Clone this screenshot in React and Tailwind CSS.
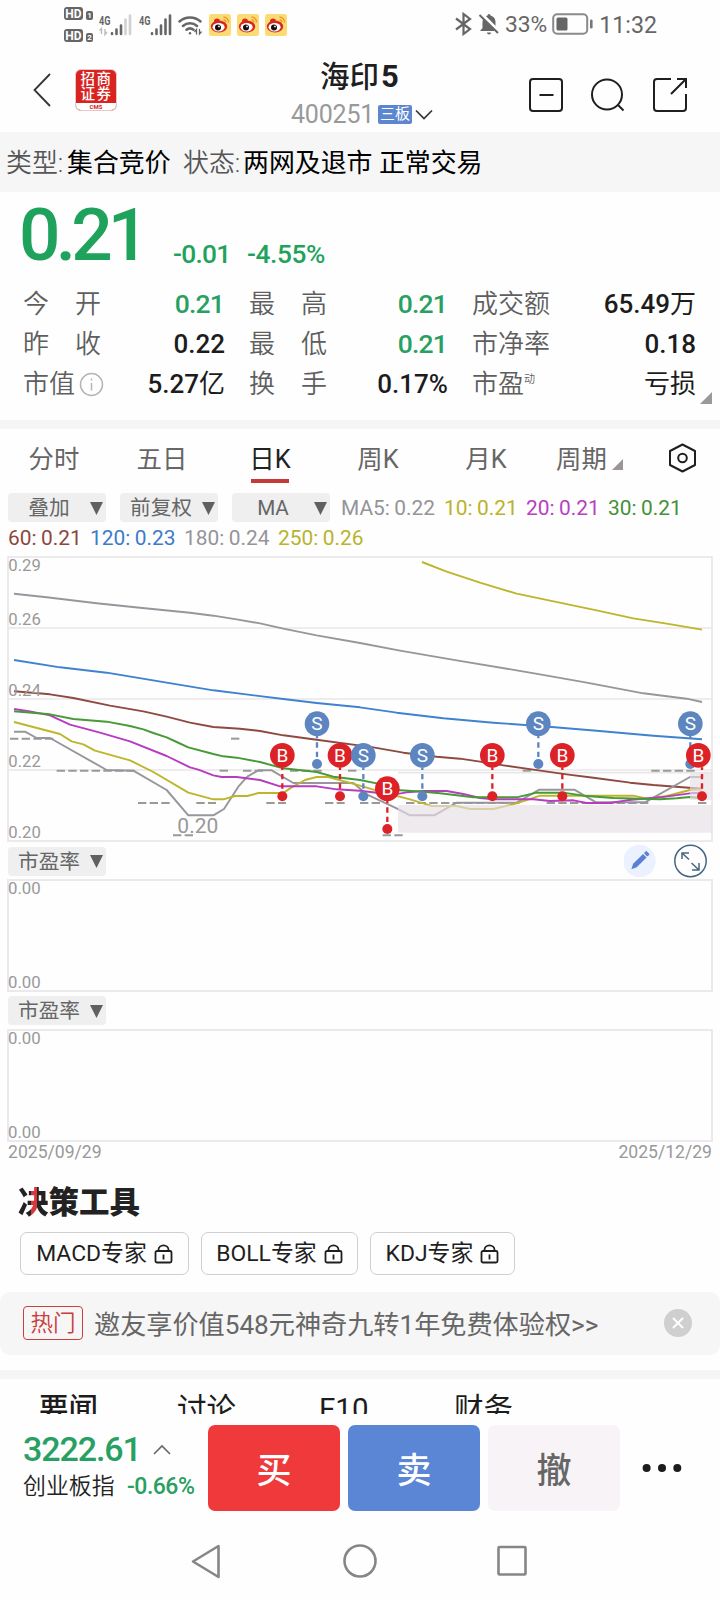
import { useState } from 'react';

const QUOTES = [
  [['今　开', '0.21', 'down'], ['最　高', '0.21', 'down'], ['成交额', '65.49万']],
  [['昨　收', '0.22'], ['最　低', '0.21', 'down'], ['市净率', '0.18']],
  [['市值', '5.27亿', '', 'info'], ['换　手', '0.17%'], ['市盈', '亏损', '', 'dyn']],
];

const TABS = ['分时', '五日', '日K', '周K', '月K'];

// chart space is 3 units per pixel
const LINES = [
  { key: 'ma250', color: '#bdb62c', points: '1266,36 1340,65 1440,98 1550,131 1650,152 1790,181 1900,205 2000,221 2106,239' },
  { key: 'ma180', color: '#98969c', points: '42,131 140,142 290,160 420,173 570,188 640,197 710,208 780,220 850,236 950,256 1080,279 1200,302 1370,331 1550,361 1620,373 1760,398 1930,430 2060,446 2106,456' },
  { key: 'ma120', color: '#3f82cf', points: '42,330 180,352 320,368 500,398 640,421 850,447 950,459 1080,472 1190,488 1330,505 1480,518 1655,531 1790,542 1960,557 2106,568' },
  { key: 'ma60',  color: '#8e4a40', points: '42,424 150,433 220,444 330,467 430,484 500,500 570,518 640,531 720,536 780,543 850,556 950,569 1120,592 1210,608 1310,620 1380,626 1440,635 1510,646 1600,659 1700,673 1780,683 1890,698 1960,705 2106,716' },
  { key: 'ma5',   color: '#98969c', points: '42,545 75,545 110,564 150,564 320,660 400,662 500,720 565,796 640,796 672,777 715,710 742,680 775,661 815,661 880,699 1060,699 1100,733 1190,775 1230,796 1303,796 1370,758 1550,758 1618,719 1723,719 1788,757 1935,757 2070,681 2106,681' },
  { key: 'ma10',  color: '#bdb62c', points: '42,516 180,552 215,574 250,583 285,602 390,631 460,666 565,728 640,748 670,748 705,738 742,738 775,729 850,729 870,715 915,690 950,681 985,681 1080,707 1140,725 1180,735 1230,748 1270,760 1295,768 1370,768 1410,777 1480,777 1550,760 1620,737 1900,737 1940,746 2000,738 2070,720 2106,718' },
  { key: 'ma20',  color: '#b63cc0', points: '42,477 90,484 150,496 210,524 300,548 390,574 500,618 570,652 595,659 640,676 665,681 710,681 780,690 840,709 950,709 1010,718 1080,722 1180,734 1220,727 1270,723 1340,723 1390,732 1440,744 1480,748 1600,748 1650,753 1720,751 1760,759 1830,759 1880,751 1920,747 1980,742 2070,730 2106,728' },
  { key: 'ma30',  color: '#479a36', points: '42,484 150,493 220,507 320,515 390,528 430,538 460,549 500,562 530,576 565,592 640,612 670,619 710,623 780,636 850,655 950,666 1000,680 1080,690 1130,700 1190,720 1270,725 1320,730 1420,742 1550,742 1610,728 1690,728 1750,737 1840,744 1980,748 2030,745 2070,741 2106,745' },
];

const FLAT_DAYS = [
  [30, 160, 566], [693, 718, 566],
  [170, 405, 662], [659, 684, 662], [729, 789, 662], [870, 965, 662], [1044, 1069, 662], [1568, 1593, 662], [1954, 2084, 662],
  [414, 510, 759], [589, 648, 759], [799, 858, 759], [975, 1034, 759], [1080, 1140, 759], [1218, 1562, 759], [1640, 1945, 759], [2094, 2119, 759],
  [519, 579, 856], [1148, 1208, 856],
];

const TRADES = [
  { type: 'S', x: 951,  y: 521, dot: 642 },
  { type: 'B', x: 847,  y: 616, dot: 739 },
  { type: 'B', x: 1020, y: 616, dot: 739 },
  { type: 'S', x: 1090, y: 616, dot: 739 },
  { type: 'B', x: 1162, y: 716, dot: 837 },
  { type: 'S', x: 1267, y: 616, dot: 739 },
  { type: 'B', x: 1477, y: 616, dot: 739 },
  { type: 'S', x: 1615, y: 521, dot: 642 },
  { type: 'B', x: 1687, y: 616, dot: 739 },
  { type: 'S', x: 2071, y: 521, dot: 642 },
  { type: 'B', x: 2095, y: 616, dot: 739, stem: 2106 },
];

function Weibo() {
  return (
    <svg width="22" height="22" viewBox="0 0 22 22" className="mr-1.5">
      <rect width="22" height="22" rx="2.5" fill="#fbdc74" />
      <ellipse cx="10" cy="12.6" rx="8.2" ry="6" fill="#d9271f" />
      <circle cx="8" cy="7.6" r="3" fill="#d9271f" />
      <ellipse cx="9.6" cy="13.2" rx="6" ry="4.2" fill="#fff" />
      <circle cx="9" cy="13.4" r="3" fill="#111" />
      <circle cx="10" cy="12.4" r="0.9" fill="#fff" />
      <path d="M14.5 3a5 5 0 0 1 5 5.5M14.6 5.8a2.4 2.4 0 0 1 2.2 2.6" fill="none" stroke="#ee9b2d" strokeWidth="1.5" />
    </svg>
  );
}

function Signal({ weak }) {
  return (
    <svg width="34" height="24" viewBox="0 0 34 24">
      <text x="0" y="11.5" fontSize="13" fontWeight="700" fill="#666" textLength="11.5" lengthAdjust="spacingAndGlyphs">4G</text>
      {weak && <path d="M2.5 21v-5.5l-2 2M6 16v5.5l2-2.5" fill="none" stroke="#bbb" strokeWidth="1.4" />}
      <g strokeWidth="2.6" strokeLinecap="round" stroke="#666">
        <path d="M13 21v-.6M17.5 21v-4.5M22 21v-8.5" />
        <path d="M26.5 21V6.500M31 21V2.5" stroke={weak ? '#d3d0d3' : '#666'} />
      </g>
    </svg>
  );
}

function StatusBar() {
  return (
    <div className="flex h-[48px] shrink-0 items-center pt-px pl-[64px] text-[#666]">
      <div className="mr-[6px] flex flex-col gap-[9px]">
        {[1, 2].map(n => (
          <div key={n} className="flex h-[13px] items-end gap-[3px]">
            <span className="flex h-[13px] w-[19px] items-center justify-center rounded-[3px] bg-[#666] text-[12px] leading-none font-bold text-white">HD</span>
            <span className="flex h-[9px] w-[7px] items-center justify-center rounded-[2px] bg-[#666] text-[8px] leading-none font-bold text-white">{n}</span>
          </div>
        ))}
      </div>
      <Signal weak />
      <div className="w-[6px]" />
      <Signal />
      <svg width="26" height="22" viewBox="0 0 26 22" className="mr-[5px] ml-[5px]" fill="none" stroke="#666" strokeWidth="2.5" strokeLinecap="round">
        <path d="M1.5 7.5a15.500 15.500 0 0 1 21 0M5 12a10.500 10.500 0 0 1 14 0M8.500 15.800a5.500 5.500 0 0 1 7 0" />
        <circle cx="12" cy="19.3" r="1.2" fill="#666" stroke="none" />
        <path d="M18.500 20v-4.500l-1.700 2M21.500 15.500V20l1.700-2" strokeWidth="1.3" />
      </svg>
      <Weibo /><Weibo /><Weibo />
      <div className="ml-auto flex items-center pr-[63px]">
        <svg width="20" height="24" viewBox="0 0 20 24" fill="none" stroke="#666" strokeWidth="2.2">
          <path d="M2 6.500l14 10.500-6.500 5V2l6.500 5L2 17.500" />
        </svg>
        <svg width="22" height="24" viewBox="0 0 22 24" className="mr-[5px] ml-[4px]">
          <path d="M11 2a1.500 1.500 0 0 0-1.500 1.500A7 7 0 0 0 4.500 10v6l-2.500 3h18l-2.500-3v-6a7 7 0 0 0-5-6.500A1.500 1.500 0 0 0 11 2zM9 20.500a2 2 0 0 0 4 0z" fill="#666" />
          <path d="M2 1l19 19" stroke="#fff" strokeWidth="4" />
          <path d="M1.500 3l18.500 18" stroke="#666" strokeWidth="2" />
        </svg>
        <span className="pt-[2px] text-[22.8px] leading-none">33%</span>
        <svg width="42" height="22" viewBox="0 0 42 22" className="mx-[5px]">
          <rect x="1.2" y="1.2" width="34" height="19.5" rx="4" fill="none" stroke="#8a8a8a" strokeWidth="2" />
          <rect x="4.5" y="4.5" width="11" height="13" rx="1.5" fill="#666" />
          <rect x="38" y="6.5" width="2.6" height="9" rx="1.2" fill="#777" />
        </svg>
        <span className="pt-[2px] text-[23.2px] leading-none">11:32</span>
      </div>
    </div>
  );
}

function Header() {
  return (
    <div className="flex h-[84px] shrink-0 pl-[32px]">
      <svg width="20" height="36" viewBox="0 0 20 36" className="mt-[24px]" fill="none" stroke="#333" strokeWidth="1.8">
        <path d="M18 2L2.500 18 18 34" />
      </svg>
      <div className="mt-[21px] ml-[23px] flex h-[42px] w-[42px] flex-col overflow-hidden rounded-[6px] border border-[#e8c8c6] bg-[#d9231f] text-center text-white">
        <div className="mt-[2px] pl-px text-[14.5px] leading-[15px] font-medium tracking-[1.5px]">招商<br />证券</div>
        <div className="mt-auto bg-white text-[6px] leading-[7px] font-bold text-[#d9231f]">CMS</div>
      </div>
      <div className="ml-[174px] w-[145px]">
        <div className="mt-[11px] pl-[29px] text-[29.5px] leading-[36px] font-medium whitespace-nowrap text-[#1f1f1f]">
          海印<span className="ml-[2px] text-[31px] font-bold">5</span>
        </div>
        <div className="mt-[5px] flex h-[28px] items-center">
          <span className="pt-[2px] text-[25px] leading-[28px] tracking-[-0.2px] text-[#999]">400251</span>
          <span className="ml-[4px] flex h-[19px] w-[34px] items-center justify-center rounded-[2px] bg-[#5c86cf] text-[15px] leading-none text-white">三板</span>
          <svg width="18" height="11" viewBox="0 0 18 11" className="ml-[3px]" fill="none" stroke="#333" strokeWidth="1.7">
            <path d="M1 1.500l8 8 8-8" />
          </svg>
        </div>
      </div>
      <svg width="160" height="36" viewBox="0 0 160 36" className="mt-[29px] ml-[93px]" fill="none" stroke="#1f1f1f" strokeWidth="2">
        <rect x="1" y="2" width="32" height="32" rx="3" />
        <path d="M10.500 18h14" />
        <circle cx="78" cy="17.5" r="15" />
        <path d="M88.500 27.500l6 6" />
        <path d="M142 2h-14a3 3 0 0 0-3 3v26a3 3 0 0 0 3 3h26a3 3 0 0 0 3-3V17M148 2h9v9M157 2l-15 15" />
      </svg>
    </div>
  );
}

function QuoteCell({ cell }) {
  const [label, value, tone, extra] = cell;
  return (
    <div className="flex items-center justify-between whitespace-nowrap">
      <div className="flex items-center text-[26px] font-[350] text-[#5e5e5e]">
        {label}
        {extra === 'info' && (
          <svg width="25" height="25" viewBox="0 0 25 25" className="ml-[4px]" fill="none" stroke="#b5b5b5" strokeWidth="1.5">
            <circle cx="12.5" cy="12.5" r="11" />
            <path d="M12.500 11v7.500M12.500 6.500v2" />
          </svg>
        )}
        {extra === 'dyn' && <span className="mb-[8px] text-[11px]">动</span>}
      </div>
      <div className={tone === 'down' ? 'pr-px text-[26.5px] font-medium tracking-[-0.8px] text-[#28a062]' : 'text-[26px] font-medium text-[#1c1c1c]'}>
        {/[亿万]$/.test(value) ? <>{value.slice(0, -1)}<span className="font-normal">{value.slice(-1)}</span></> : <span className={value === '亏损' ? 'font-normal' : ''}>{value}</span>}
      </div>
    </div>
  );
}

function Selector({ label }) {
  return (
    <div className="flex h-[29px] w-[98px] items-center rounded-[4px] bg-[#efefef] text-[#666]">
      <div className="w-[82px] pt-[2px] text-center text-[20.7px] leading-none">{label}</div>
      <svg width="13" height="14" viewBox="0 0 13 14"><path d="M0 1h13L6.500 14z" fill="#606060" /></svg>
    </div>
  );
}

function Ma({ name, value, color, width }) {
  return (
    <div className="shrink-0 text-[20.9px] leading-none whitespace-nowrap" style={{ color, width }}>
      {name}:<span className="ml-[4.5px]">{value}</span>
    </div>
  );
}

function KChart() {
  return (
    <svg width="720" height="288" viewBox="0 15 2160 864" className="block shrink-0">
      <g fill="none" stroke="#e9e6e8" strokeWidth="5">
        <rect x="24" y="21" width="2112" height="852" />
        <path d="M24 234H2136M24 447H2136M24 660H2136M1194 668H2136" />
      </g>
      <g stroke="#999" strokeWidth="6" strokeDasharray="25 10">
        {FLAT_DAYS.map(([x1, x2, y]) => <line key={`${x1}-${y}`} x1={x1} x2={x2} y1={y} y2={y} />)}
      </g>
      {LINES.map(l => (
        <polyline key={l.key} points={l.points} fill="none" stroke={l.color} strokeWidth="5.8" strokeLinejoin="round" />
      ))}
      <rect x="1194" y="765" width="942" height="83" fill="#e6dfe5" fillOpacity="0.65" />
      <rect x="2070" y="668" width="66" height="82" fill="#e6dfe5" fillOpacity="0.65" />
      <g fontSize="50" fill="#999">
        <text x="25" y="63">0.29</text>
        <text x="25" y="225">0.26</text>
        <text x="25" y="438">0.24</text>
        <text x="25" y="651">0.22</text>
        <text x="25" y="864">0.20</text>
        <text x="532" y="849" fontSize="63">0.20</text>
      </g>
      {TRADES.map(t => {
        const color = t.type === 'B' ? '#dc2226' : '#5d86c1';
        const stem = t.stem ?? t.x;
        return (
          <g key={t.x}>
            <line x1={stem} x2={stem} y1={t.y + 36} y2={t.dot} stroke={color} strokeWidth="7" strokeDasharray="16 12" strokeDashoffset="8" />
            <circle cx={stem} cy={t.dot} r="15" fill={color} />
            <circle cx={t.x} cy={t.y} r="37" fill={color} />
            <text x={t.x} y={t.y + 20} fontSize="57" fill="#fff" textAnchor="middle">{t.type}</text>
          </g>
        );
      })}
    </svg>
  );
}

function EmptyPane() {
  return (
    <div className="mx-[7px] flex h-[113px] shrink-0 flex-col justify-between border-2 border-[#ebe9eb] text-[16.8px] leading-[15px] text-[#999]">
      <span className="-ml-px">0.00</span>
      <span className="-ml-px">0.00</span>
    </div>
  );
}

function Lock() {
  return (
    <svg width="19" height="20" viewBox="0 0 19 20" fill="none" stroke="#1f1f1f" strokeWidth="1.8">
      <rect x="1.5" y="7" width="16" height="11.5" rx="1.5" />
      <path d="M4.500 7V6a5 4.600 0 0 1 10 0v1M9.500 10.500v5" />
    </svg>
  );
}

export default function App() {
  const [tab, setTab] = useState('日K');

  return (
    <div className="flex h-[1600px] w-[720px] flex-col overflow-hidden bg-[#fefefe] font-[Roboto,'Noto_Sans_CJK_SC',sans-serif]">
      <StatusBar />
      <Header />

      <div className="flex h-[60px] shrink-0 items-center bg-[#f6f6f6] pt-[4px] pl-[6px] text-[25.9px] leading-none whitespace-nowrap text-black">
        <span className="w-[61px] font-[350] text-[#555]">类型:</span>
        <span className="w-[116px]">集合竞价</span>
        <span className="w-[60px] font-[350] text-[#555]">状态:</span>
        <span>两网及退市 正常交易</span>
      </div>

      {/* Price */}
      <div className="flex h-[91px] shrink-0 text-[#1fa35c]">
        <div className="w-[151px] pl-[19px] text-[73px] leading-[86px] font-medium tracking-[-4.8px]">0.21</div>
        <div className="mt-[48px] ml-[22px] w-[74px] text-[26.3px] leading-[28px] font-medium tracking-[-0.7px]">-0.01</div>
        <div className="mt-[48px] text-[26.3px] leading-[28px] font-medium tracking-[-0.4px]">-4.55%</div>
      </div>
      <div className="flex h-[137px] shrink-0 items-start pt-px pl-[23px]">
        <div className="grid auto-rows-[40px] grid-cols-[202px_199px_224px] gap-x-[24px]">
          {QUOTES.flat().map(cell => <QuoteCell key={cell[0]} cell={cell} />)}
        </div>
        <svg width="12" height="12" viewBox="0 0 12 12" className="mt-[108px] ml-[4px]"><path d="M12 0v12H0z" fill="#999" /></svg>
      </div>
      <div className="h-[9px] shrink-0 bg-[#f5f5f5]" />

      {/* Period tabs */}
      <div className="flex h-[64px] shrink-0 text-[25.4px] leading-none text-[#666]">
        {TABS.map(t => (
          <button key={t} onClick={() => setTab(t)}
            className={`flex w-[108px] flex-col items-center pt-[18px] ${t === tab ? 'text-[#222]' : ''}`}>
            <span>{t}</span>
            {t === tab && <span className="mt-[7px] h-[4px] w-[38px] bg-[#c33a38]" />}
          </button>
        ))}
        <button className="flex w-[128px] items-start pt-[18px] pl-[16px]">
          周期
          <svg width="11" height="11" viewBox="0 0 11 11" className="mt-[12px] ml-[5px]"><path d="M11 0v11H0z" fill="#9c9598" /></svg>
        </button>
        <svg width="28" height="30" viewBox="0 0 28 30" className="mt-[14px] block" fill="none" stroke="#1f1f1f" strokeWidth="2">
          <path d="M14.500 1.500L27 8v14l-12.500 6.500L2 22V8z" strokeLinejoin="round" />
          <circle cx="14.5" cy="15" r="4.3" />
        </svg>
      </div>

      {/* Indicators */}
      <div className="flex h-[29px] shrink-0 items-center pl-[8px]">
        <div className="flex w-[333px] gap-[14px]">
          <Selector label="叠加" />
          <Selector label="前复权" />
          <Selector label="MA" />
        </div>
        <div className="flex pt-[2px]">
          <Ma name="MA5" value="0.22" color="#949499" width={103} />
          <Ma name="10" value="0.21" color="#b9b32c" width={82} />
          <Ma name="20" value="0.21" color="#b83fc0" width={82} />
          <Ma name="30" value="0.21" color="#449138" width={80} />
        </div>
      </div>
      <div className="flex h-[33px] shrink-0 items-center pl-[8px]">
        <Ma name="60" value="0.21" color="#8b473d" width={82} />
        <Ma name="120" value="0.23" color="#3a7cc9" width={94} />
        <Ma name="180" value="0.24" color="#949499" width={94} />
        <Ma name="250" value="0.26" color="#b9b32c" width={94} />
      </div>

      <KChart />

      <div className="flex h-[36px] shrink-0 items-center pl-[8px]">
        <Selector label="市盈率" />
        <svg width="84" height="34" viewBox="0 0 84 34" className="mr-[12px] ml-auto">
          <circle cx="15.5" cy="17" r="16.2" fill="#ebf1fe" />
          <g transform="rotate(45 15.500 17)" fill="#5a80d3">
            <rect x="13" y="5" width="5" height="3.4" rx="1" />
            <path d="M13 9.500h5v14l-2.500 5-2.500-5z" />
          </g>
          <g fill="none" stroke="#466680" strokeWidth="1.5">
            <circle cx="66.5" cy="17" r="15.7" />
            <path d="M58 15V9h7M58 9l7 6.500M75 19v7h-7M75 26l-7.500-7" />
          </g>
        </svg>
      </div>
      <EmptyPane />
      <div className="flex h-[37px] shrink-0 items-center pl-[8px]"><Selector label="市盈率" /></div>
      <EmptyPane />
      <div className="flex h-[38px] shrink-0 justify-between px-[8px] pt-[2px] text-[17.6px] leading-[16px] text-[#999]">
        <span>2025/09/29</span>
        <span>2025/12/29</span>
      </div>

      {/* Tools */}
      <div className="flex h-[52px] shrink-0 items-start pt-[7px] pl-[18px] text-[30.5px] leading-[32px] font-black text-[#222]">
        <span className="bg-[linear-gradient(90deg,#222_42%,#d8383b_42%,#d8383b_62%,#222_62%)] bg-clip-text text-transparent">决</span>策工具
      </div>
      <div className="flex h-[60px] shrink-0 gap-[12px] pl-[20px] text-[22.9px] leading-none text-[#1f1f1f]">
        <div className="flex h-[43px] w-[169px] items-center justify-center gap-[7px] rounded-[7px] border border-[#cfcfcf]"><span className="pt-[2px]">MACD专家</span><Lock /></div>
        <div className="flex h-[43px] w-[157px] items-center justify-center gap-[7px] rounded-[7px] border border-[#cfcfcf]"><span className="pt-[2px]">BOLL专家</span><Lock /></div>
        <div className="flex h-[43px] w-[145px] items-center justify-center gap-[7px] rounded-[7px] border border-[#cfcfcf]"><span className="pt-[2px]">KDJ专家</span><Lock /></div>
      </div>
      <div className="flex h-[63px] shrink-0 items-center rounded-[10px] bg-[#f6f6f6] pl-[23px]">
        <span className="mb-[2px] flex h-[34px] w-[60px] items-center justify-center rounded-[4px] border border-[#c9403f] pt-[2px] text-[22.5px] leading-none font-[350] text-[#cc3b3a]">热门</span>
        <span className="ml-[11px] pt-[3px] text-[26.15px] leading-none whitespace-nowrap text-[#666]">邀友享价值548元神奇九转1年免费体验权&gt;&gt;</span>
        <svg width="28" height="28" viewBox="0 0 28 28" className="mr-[28px] mb-[2px] ml-auto">
          <circle cx="14" cy="14" r="14" fill="#cfcfcf" />
          <path d="M9 9l10 10M19 9L9 19" stroke="#fff" strokeWidth="2" />
        </svg>
      </div>
      <div className="mt-[15px] h-[9px] shrink-0 bg-[#f5f5f5]" />

      <div className="flex h-[35px] shrink-0 overflow-hidden pt-[15px] pl-[39px] text-[29.5px] leading-[30px] text-[#1c1c1c]">
        <span className="w-[138px] shrink-0 font-medium">要闻</span>
        <span className="w-[142px] shrink-0">讨论</span>
        <span className="w-[135px] shrink-0">F10</span>
        <span>财务</span>
      </div>

      {/* Trade bar */}
      <div className="flex h-[108px] shrink-0 items-start pt-[11px] pl-[23px]">
        <div className="w-[185px] whitespace-nowrap">
          <div className="flex items-center pt-[5px] text-[34px] leading-[38px] font-medium tracking-[-1.1px] text-[#28a062]">
            3222.61
            <svg width="18" height="11" viewBox="0 0 18 11" className="ml-[12px]" fill="none" stroke="#666" strokeWidth="1.6"><path d="M1 10l8-8 8 8" /></svg>
          </div>
          <div className="mt-[5px] flex items-center text-[22.9px] leading-[26px] text-[#222]">
            <span className="w-[104px] pt-px font-[350]">创业板指</span>
            <span className="text-[23px] font-medium tracking-[-0.5px] text-[#28a062]">-0.66%</span>
          </div>
        </div>
        <div className="flex gap-[8px] text-[35px] leading-none font-medium text-white">
          <button className="h-[86px] w-[132px] rounded-[7px] bg-[#ef393b] pt-[6px]">买</button>
          <button className="h-[86px] w-[132px] rounded-[7px] bg-[#5b86d5] pt-[6px]">卖</button>
          <button className="h-[86px] w-[132px] rounded-[7px] bg-[#f7f3f7] pt-[6px] text-[#666]">撤</button>
        </div>
        <svg width="40" height="10" viewBox="0 0 40 10" className="mt-[38px] ml-[22px]" fill="#1c1c1c">
          <circle cx="4.6" cy="5" r="4" /><circle cx="20" cy="5" r="4" /><circle cx="35.3" cy="5" r="4" />
        </svg>
      </div>

      {/* System navigation */}
      <svg width="720" height="78" viewBox="0 0 720 78" className="block shrink-0" fill="none" stroke="#868686" strokeWidth="2.6" strokeLinejoin="round">
        <path d="M218.500 24v31L193 39.500z" />
        <circle cx="360" cy="39" r="15.5" />
        <rect x="498.5" y="25" width="27" height="27.5" rx="1" />
      </svg>
    </div>
  );
}
